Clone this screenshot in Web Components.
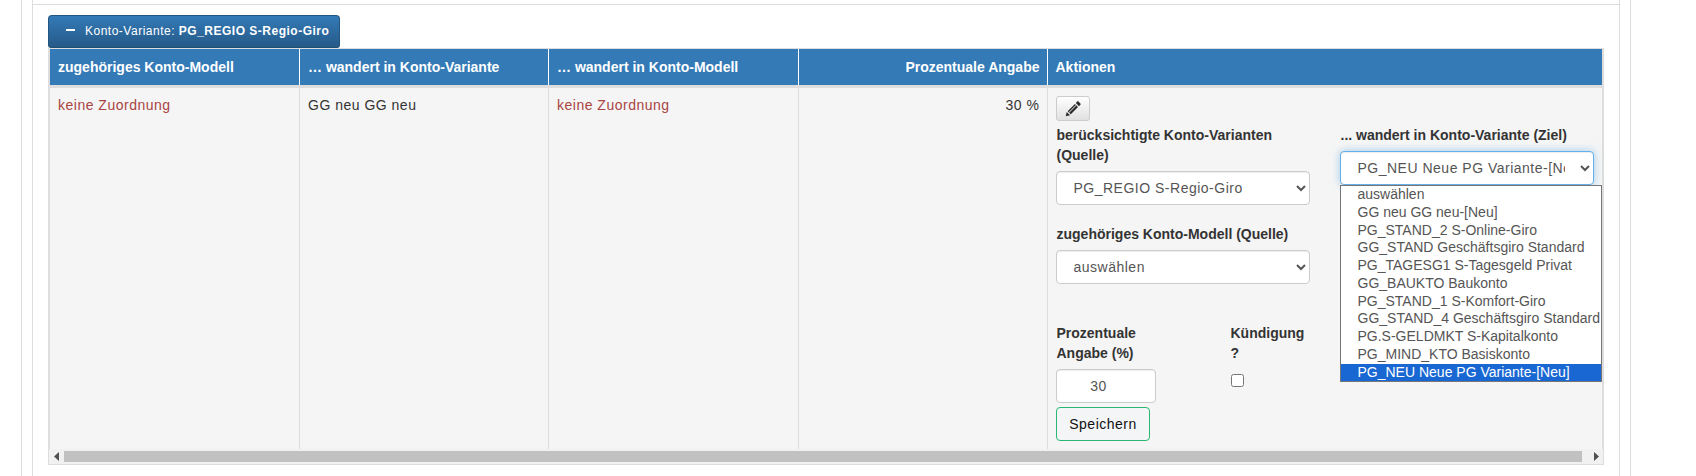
<!DOCTYPE html>
<html lang="de">
<head>
<meta charset="utf-8">
<title>Konto-Variante</title>
<style>
  html, body { margin: 0; height: 476px; overflow: hidden; background: #fff; }
  body { font: 14px/20px "Liberation Sans", Arial, sans-serif; color: #333; letter-spacing: .5px; }
</style>
</head>
<body>
<page-frame>
  <konto-panel>
    <span slot="title">Konto-Variante: <b>PG_REGIO S-Regio-Giro</b></span>
    <konto-table></konto-table>
  </konto-panel>
</page-frame>

<script>
// Outer page gutters and the white panel with its thin grey lines
class PageFrame extends HTMLElement {
  constructor() {
    super();
    this.attachShadow({ mode: 'open' });
    this.shadowRoot.innerHTML = `
      <style>
        :host { display: block; margin: 0 65px 0 21px; padding: 0 10px; border: solid #ddd; border-width: 0 1px; height: 476px; width: 1588px; }
        .inner { border: solid #ddd; border-width: 0 1px; height: 476px; }
        .rule { height: 4px; border-bottom: 1px solid #ddd; }
        .body { padding: 10px 15px 0; }
      </style>
      <div class="inner"><div class="rule"></div><div class="body"><slot></slot></div></div>
    `;
  }
}

// Collapsible block: blue toggle button on top of its content
class KontoPanel extends HTMLElement {
  constructor() {
    super();
    this.attachShadow({ mode: 'open' });
    this.shadowRoot.innerHTML = `
      <style>
        :host { display: block; }
        .toggle {
          display: inline-flex; align-items: center; vertical-align: top; height: 33px; box-sizing: border-box;
          padding: 0 10px 0 17px; gap: 10px;
          border: 1px solid #245580; border-bottom-color: #204d74; border-radius: 4px 4px 3px 3px;
          background: linear-gradient(to bottom, #337ab7 0, #265a88 100%);
          color: #fff; font-size: 12px; line-height: 17px;
        }
        .minus { width: 9px; height: 2px; background: #fff; margin-top: -3px; }
        .head { height: 33px; }
      </style>
      <div class="head"><div class="toggle"><i class="minus"></i><slot name="title"></slot></div></div>
      <slot></slot>
    `;
  }
}

// Hand drawn horizontal scrollbar under the table
class BarScroll extends HTMLElement {
  constructor() {
    super();
    this.attachShadow({ mode: 'open' });
    this.shadowRoot.innerHTML = `
      <style>
        :host { display: flex; height: 15px; background: #f1f1f1; align-items: center; }
        .arrow { flex: 0 0 15px; height: 15px; display: flex; align-items: center; justify-content: center; }
        .track { flex: 1; }
        .thumb { height: 11px; background: #c1c1c1; margin-right: 6px; }
      </style>
      <div class="arrow"><svg width="6" height="9" viewBox="0 0 6 9"><path d="M5 0v9L0 4.5z" fill="#505050"/></svg></div>
      <div class="track"><div class="thumb"></div></div>
      <div class="arrow"><svg width="6" height="9" viewBox="0 0 6 9"><path d="M1 0v9l5-4.5z" fill="#505050"/></svg></div>
    `;
  }
}

// Open option list of a select, lies over the page
class DropList extends HTMLElement {
  constructor() {
    super();
    this.attachShadow({ mode: 'open' });
    const items = (this.getAttribute('items') || '').split('|');
    const active = this.getAttribute('active');
    this.shadowRoot.innerHTML = `
      <style>
        :host { display: block; position: absolute; left: 0; top: 34px; width: 262px; box-sizing: border-box; border: 1px solid #767676; background: #fff; z-index: 5; overflow: hidden; letter-spacing: 0; }
        div { height: 17.75px; line-height: 17.75px; padding-left: 17px; color: #555; white-space: nowrap; }
        .on { background: #1967d2; color: #fff; }
      </style>
      ${items.map(t => `<div class="${t === active ? 'on' : ''}">${t}</div>`).join('')}
    `;
  }
}

// Edit form shown in the "Aktionen" cell
class ActionForm extends HTMLElement {
  constructor() {
    super();
    this.attachShadow({ mode: 'open' });
    this.shadowRoot.innerHTML = `
      <style>
        :host { display: block; }
        .edit {
          display: flex; align-items: center; justify-content: center; width: 34px; height: 25px; box-sizing: border-box; padding: 0;
          border: 1px solid #ccc; border-radius: 3px; background: linear-gradient(to bottom, #fff 0, #e0e0e0 100%);
        }
        .cols { display: grid; grid-template-columns: 254px 254px; column-gap: 30px; margin-top: 4px; }
        label { display: block; font-weight: bold; letter-spacing: 0; margin-bottom: 6px; padding-left: 1px; }
        .group { margin-bottom: 19px; }
        select, .num {
          display: block; box-sizing: border-box; width: 100%; height: 34px; padding: 6px 12px 6px 13px; font: inherit; letter-spacing: inherit; color: #555;
          background: #fff; border: 1px solid #ccc; border-radius: 4px; box-shadow: inset 0 1px 1px rgba(0,0,0,.075); margin: 0;
        }
        .focus { border-color: #66afe9; box-shadow: inset 0 1px 1px rgba(0,0,0,.075), 0 0 8px rgba(102,175,233,.6); outline: 0; }
        .anchor { position: relative; }
        .lower { display: grid; grid-template-columns: 100px 80px; column-gap: 74px; margin-top: 39px; }
        .num { width: 100%; text-align: center; padding: 6px 26px 6px 12px; }
        input[type=checkbox] { display: block; width: 13px; height: 13px; margin: 11px 0 0 1px; }
        .save {
          display: block; margin-top: 4px; width: 94px; height: 34px; box-sizing: border-box; padding: 0 0 0 1px;
          border: 1px solid #2bb673; border-radius: 4px; background: #f3f5f7; color: #111; font: inherit; letter-spacing: inherit;
        }
      </style>
      <button class="edit" aria-label="Bearbeiten">
        <svg width="16" height="16" viewBox="0 0 16 16"><path fill="#2b2b2b" fill-rule="evenodd" d="M.7 15.3 1.7 10.9 5.1 14.3ZM2.7 10.2 9.9 3 13 6.1 5.8 13.3ZM4 10.9 10.6 4.3 11.1 4.8 4.5 11.4ZM10.8 2 12.2.6C12.6.2 13.1.2 13.5.6L15.4 2.5C15.8 2.9 15.8 3.4 15.4 3.8L14 5.2Z"/></svg>
      </button>
      <div class="cols">
        <div>
          <div class="group">
            <label>berücksichtigte Konto-Varianten (Quelle)</label>
            <select><option>PG_REGIO S-Regio-Giro</option></select>
          </div>
          <div>
            <label>zugehöriges Konto-Modell (Quelle)</label>
            <select><option>auswählen</option></select>
          </div>
          <div class="lower">
            <div>
              <label>Prozentuale Angabe (%)</label>
              <input class="num" value="30">
              <button class="save">Speichern</button>
            </div>
            <div>
              <label>Kündigung ?</label>
              <input type="checkbox">
            </div>
          </div>
        </div>
        <div>
          <label>... wandert in Konto-Variante (Ziel)</label>
          <div class="anchor">
            <select class="focus"><option>PG_NEU Neue PG Variante-[Neu]</option></select>
            <drop-list active="PG_NEU Neue PG Variante-[Neu]" items="auswählen|GG neu GG neu-[Neu]|PG_STAND_2 S-Online-Giro|GG_STAND Geschäftsgiro Standard|PG_TAGESG1 S-Tagesgeld Privat|GG_BAUKTO Baukonto|PG_STAND_1 S-Komfort-Giro|GG_STAND_4 Geschäftsgiro Standard|PG.S-GELDMKT S-Kapitalkonto|PG_MIND_KTO Basiskonto|PG_NEU Neue PG Variante-[Neu]"></drop-list>
          </div>
        </div>
      </div>
    `;
  }
}

// The data table with its blue header and the scrollbar below
class KontoTable extends HTMLElement {
  constructor() {
    super();
    this.attachShadow({ mode: 'open' });
    this.shadowRoot.innerHTML = `
      <style>
        :host { display: block; border: 1px solid #ddd; width: 1556px; box-sizing: border-box; }
        table { border-collapse: collapse; table-layout: fixed; width: 100%; border-style: hidden; }
        .wrap { border: solid #ddd; border-width: 0 1px; }
        th { background: #337ab7; color: #fff; text-align: left; padding: 8px; height: 20px; border-left: 1px solid #fff; border-bottom: 3px solid #ddd; box-sizing: content-box; letter-spacing: 0; }
        th:first-child { border-left: 0; }
        td { background: #f5f5f5; padding: 7px 8px 8px; vertical-align: top; border-left: 1px solid #ddd; border-bottom: 1px solid #ddd; }
        td:first-child { border-left: 0; }
        td.act { padding-top: 8px; }
        th.right, td.right { text-align: right; padding-right: 7px; }
        .none { color: #a94442; }
      </style>
      <div class="wrap">
        <table>
          <colgroup><col style="width:249.5px"><col style="width:249px"><col style="width:250px"><col style="width:248.5px"><col></colgroup>
          <thead><tr>
            <th>zugehöriges Konto-Modell</th>
            <th>… wandert in Konto-Variante</th>
            <th>… wandert in Konto-Modell</th>
            <th class="right">Prozentuale Angabe</th>
            <th>Aktionen</th>
          </tr></thead>
          <tbody><tr>
            <td class="none">keine Zuordnung</td>
            <td>GG neu GG neu</td>
            <td class="none">keine Zuordnung</td>
            <td class="right">30 %</td>
            <td class="act"><action-form></action-form></td>
          </tr></tbody>
        </table>
      </div>
      <bar-scroll></bar-scroll>
    `;
  }
}

customElements.define('drop-list', DropList);
customElements.define('bar-scroll', BarScroll);
customElements.define('action-form', ActionForm);
customElements.define('konto-table', KontoTable);
customElements.define('konto-panel', KontoPanel);
customElements.define('page-frame', PageFrame);
</script>
</body>
</html>
